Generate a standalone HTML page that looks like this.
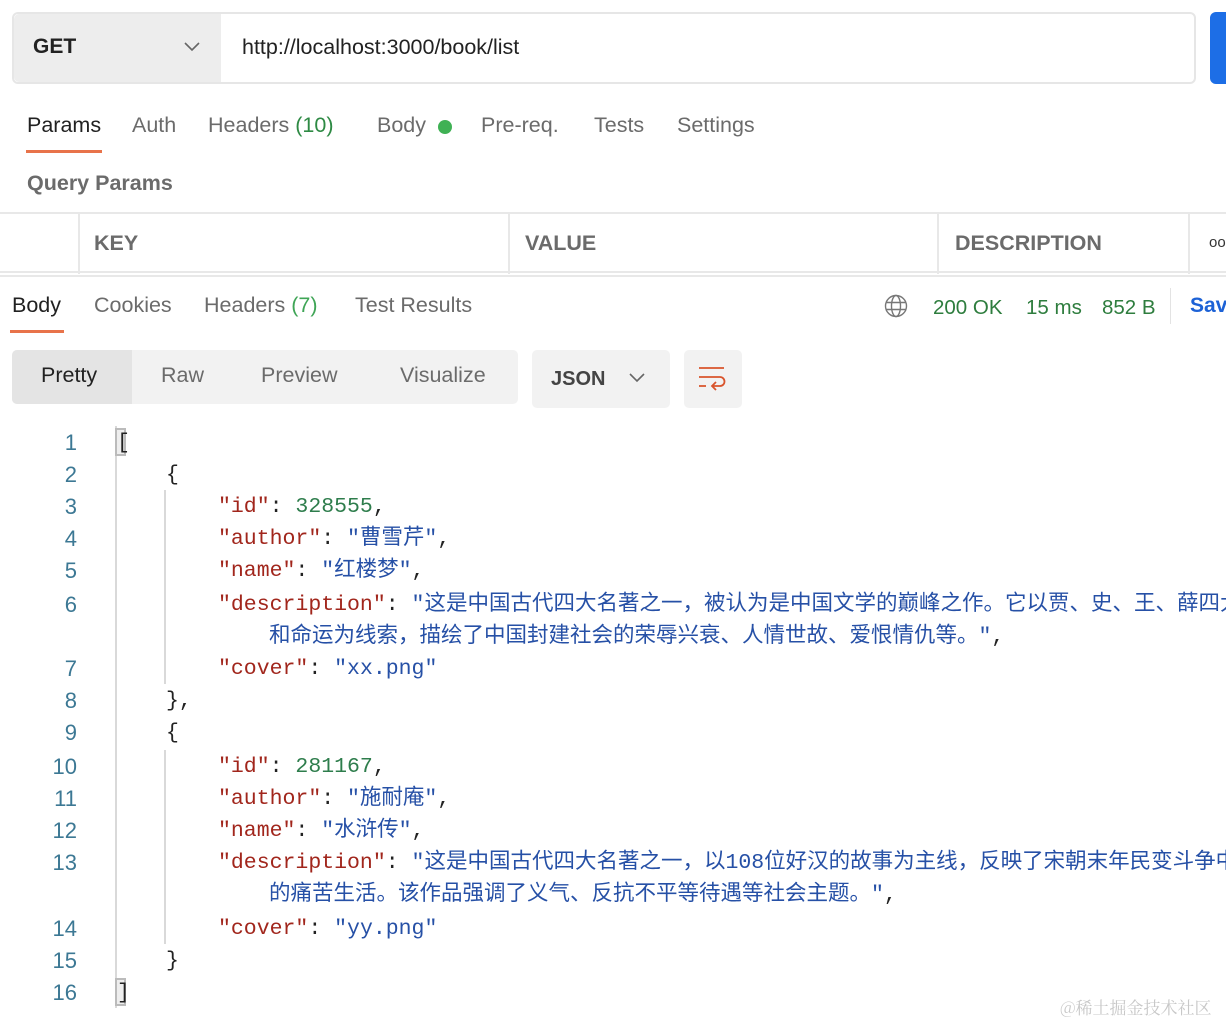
<!DOCTYPE html>
<html><head><meta charset="utf-8"><style>
*{margin:0;padding:0;box-sizing:border-box}
html,body{width:1226px;height:1022px;overflow:hidden}
body{background:#fff;font-family:"Liberation Sans","Noto Sans CJK SC",sans-serif;position:relative;color:#212121}
#w{position:absolute;left:0;top:0;width:1226px;height:1022px;overflow:hidden}
.a{position:absolute;white-space:nowrap}
.tab{font-size:21.5px;color:#6b6b6b}
.code{font-family:"Liberation Mono","Noto Sans CJK SC",monospace;font-size:21.5px;line-height:32px;height:32px}
.ln{position:absolute;width:60px;left:17px;text-align:right;font-family:"Liberation Sans",sans-serif;font-size:22px;color:#3c7894;line-height:32px}
.k{color:#a1261c}.s{color:#2650a6}.n{color:#2e7d4c}.p{color:#222}
</style></head><body><div id="w">
<div class="a" style="left:12px;top:12px;width:1184px;height:72px;border:2px solid #e6e6e6;border-radius:6px;background:#fff"></div>
<div class="a" style="left:14px;top:14px;width:207px;height:68px;background:#ededed;border-radius:5px 0 0 5px"></div>
<div class="a" style="left:33px;top:35px;font-size:21px;font-weight:bold;color:#222">GET</div>
<svg class="a" style="left:183px;top:40px" width="18" height="14"><path d="M2 3l7 7 7-7" stroke="#666" stroke-width="1.6" fill="none"/></svg>
<div class="a" style="left:242px;top:35px;font-size:21.5px;color:#222">http://localhost:3000/book/list</div>
<div class="a" style="left:1210px;top:12px;width:30px;height:72px;background:#1d6ee6;border-radius:6px"></div>
<div class="a tab" style="left:27px;top:113px;color:#212121">Params</div>
<div class="a" style="left:26px;top:150px;width:76px;height:3px;background:#e8734a"></div>
<div class="a tab" style="left:132px;top:113px">Auth</div>
<div class="a tab" style="left:208px;top:113px">Headers <span style="color:#2e8a44">(10)</span></div>
<div class="a tab" style="left:377px;top:113px">Body</div>
<div class="a" style="left:438px;top:120px;width:14px;height:14px;border-radius:50%;background:#3fb154"></div>
<div class="a tab" style="left:481px;top:113px">Pre-req.</div>
<div class="a tab" style="left:594px;top:113px">Tests</div>
<div class="a tab" style="left:677px;top:113px">Settings</div>
<div class="a" style="left:27px;top:171px;font-size:21.5px;font-weight:bold;color:#6b6b6b">Query Params</div>
<div class="a" style="left:0;top:212px;width:1226px;height:2px;background:#e8e8e8"></div>
<div class="a" style="left:0;top:271px;width:1226px;height:2px;background:#e8e8e8"></div>
<div class="a" style="left:0;top:275px;width:1226px;height:2px;background:#e8e8e8"></div>
<div class="a" style="left:78px;top:212px;width:2px;height:62px;background:#e8e8e8"></div>
<div class="a" style="left:508px;top:212px;width:2px;height:62px;background:#e8e8e8"></div>
<div class="a" style="left:937px;top:212px;width:2px;height:62px;background:#e8e8e8"></div>
<div class="a" style="left:1188px;top:212px;width:2px;height:62px;background:#e8e8e8"></div>
<div class="a" style="left:94px;top:231px;font-size:21.5px;font-weight:bold;color:#6b6b6b">KEY</div>
<div class="a" style="left:525px;top:231px;font-size:21.5px;font-weight:bold;color:#6b6b6b">VALUE</div>
<div class="a" style="left:955px;top:231px;font-size:21.5px;font-weight:bold;color:#6b6b6b">DESCRIPTION</div>
<div class="a" style="left:1209px;top:234px;font-size:15px;color:#333">oo</div>
<div class="a tab" style="left:12px;top:293px;color:#212121">Body</div>
<div class="a" style="left:10px;top:330px;width:54px;height:3px;background:#e8734a"></div>
<div class="a tab" style="left:94px;top:293px">Cookies</div>
<div class="a tab" style="left:204px;top:293px">Headers <span style="color:#3fa556">(7)</span></div>
<div class="a tab" style="left:355px;top:293px">Test Results</div>
<svg class="a" style="left:884px;top:294px" width="24" height="24" viewBox="0 0 24 24" fill="none" stroke="#777" stroke-width="1.4"><circle cx="12" cy="12" r="10.5"/><ellipse cx="12" cy="12" rx="4.5" ry="10.5"/><path d="M2 8.5h20M2 15.5h20"/></svg>
<div class="a" style="left:933px;top:296px;font-size:20.5px;color:#2e7d3e">200 OK</div>
<div class="a" style="left:1026px;top:296px;font-size:20.5px;color:#2e7d3e">15 ms</div>
<div class="a" style="left:1102px;top:296px;font-size:20.5px;color:#2e7d3e">852 B</div>
<div class="a" style="left:1170px;top:288px;width:1px;height:36px;background:#e3e3e3"></div>
<div class="a" style="left:1190px;top:294px;font-size:21px;font-weight:bold;color:#1d62d6">Save</div>
<div class="a" style="left:12px;top:350px;width:506px;height:54px;background:#f2f2f2;border-radius:5px"></div>
<div class="a" style="left:12px;top:350px;width:120px;height:54px;background:#e4e4e4;border-radius:5px 0 0 5px"></div>
<div class="a tab" style="left:41px;top:363px;color:#212121">Pretty</div>
<div class="a tab" style="left:161px;top:363px">Raw</div>
<div class="a tab" style="left:261px;top:363px">Preview</div>
<div class="a tab" style="left:400px;top:363px">Visualize</div>
<div class="a" style="left:532px;top:350px;width:138px;height:58px;background:#f2f2f2;border-radius:5px"></div>
<div class="a" style="left:551px;top:368px;font-size:20px;font-weight:bold;color:#444">JSON</div>
<svg class="a" style="left:628px;top:372px" width="18" height="12"><path d="M2 2l7 7 7-7" stroke="#666" stroke-width="1.6" fill="none"/></svg>
<div class="a" style="left:684px;top:350px;width:58px;height:58px;background:#f2f2f2;border-radius:5px"></div>
<svg class="a" style="left:698px;top:365px" width="30" height="28" viewBox="0 0 30 28" fill="none" stroke="#d9542c" stroke-width="1.8"><path d="M1 3h25M1 12h21a4.5 4.5 0 0 1 0 9h-7M1 21h7M18 17l-4 4 4 4"/></svg>
<div class="a" style="left:115px;top:426px;width:2px;height:582px;background:#d9d9d9"></div>
<div class="a" style="left:164px;top:490px;width:2px;height:194px;background:#d9d9d9"></div>
<div class="a" style="left:164px;top:750px;width:2px;height:194px;background:#d9d9d9"></div>
<div class="a" style="left:115px;top:428px;width:11px;height:28px;border:2px solid #bbb;background:#eee"></div>
<div class="a" style="left:115px;top:978px;width:11px;height:28px;border:2px solid #bbb;background:#eee"></div>
<div class="ln" style="top:427px">1</div>
<div class="ln" style="top:459px">2</div>
<div class="ln" style="top:491px">3</div>
<div class="ln" style="top:523px">4</div>
<div class="ln" style="top:555px">5</div>
<div class="ln" style="top:589px">6</div>
<div class="ln" style="top:653px">7</div>
<div class="ln" style="top:685px">8</div>
<div class="ln" style="top:717px">9</div>
<div class="ln" style="top:751px">10</div>
<div class="ln" style="top:783px">11</div>
<div class="ln" style="top:815px">12</div>
<div class="ln" style="top:847px">13</div>
<div class="ln" style="top:913px">14</div>
<div class="ln" style="top:945px">15</div>
<div class="ln" style="top:977px">16</div>
<div class="a code p" style="left:117px;top:427px">[</div>
<div class="a code p" style="left:166px;top:459px">{</div>
<div class="a code" style="left:218px;top:491px"><span class="k">"id"</span><span class="p">: </span><span class="n">328555</span><span class="p">,</span></div>
<div class="a code" style="left:218px;top:523px"><span class="k">"author"</span><span class="p">: </span><span class="s">"曹雪芹"</span><span class="p">,</span></div>
<div class="a code" style="left:218px;top:555px"><span class="k">"name"</span><span class="p">: </span><span class="s">"红楼梦"</span><span class="p">,</span></div>
<div class="a code" style="left:218px;top:589px"><span class="k">"description"</span><span class="p">: </span><span class="s">"这是中国古代四大名著之一，被认为是中国文学的巅峰之作。它以贾、史、王、薛四大</span></div>
<div class="a code" style="left:269px;top:621px"><span class="s">和命运为线索，描绘了中国封建社会的荣辱兴衰、人情世故、爱恨情仇等。"</span><span class="p">,</span></div>
<div class="a code" style="left:218px;top:653px"><span class="k">"cover"</span><span class="p">: </span><span class="s">"xx.png"</span></div>
<div class="a code p" style="left:166px;top:685px">},</div>
<div class="a code p" style="left:166px;top:717px">{</div>
<div class="a code" style="left:218px;top:751px"><span class="k">"id"</span><span class="p">: </span><span class="n">281167</span><span class="p">,</span></div>
<div class="a code" style="left:218px;top:783px"><span class="k">"author"</span><span class="p">: </span><span class="s">"施耐庵"</span><span class="p">,</span></div>
<div class="a code" style="left:218px;top:815px"><span class="k">"name"</span><span class="p">: </span><span class="s">"水浒传"</span><span class="p">,</span></div>
<div class="a code" style="left:218px;top:847px"><span class="k">"description"</span><span class="p">: </span><span class="s">"这是中国古代四大名著之一，以108位好汉的故事为主线，反映了宋朝末年民变斗争中</span></div>
<div class="a code" style="left:269px;top:879px"><span class="s">的痛苦生活。该作品强调了义气、反抗不平等待遇等社会主题。"</span><span class="p">,</span></div>
<div class="a code" style="left:218px;top:913px"><span class="k">"cover"</span><span class="p">: </span><span class="s">"yy.png"</span></div>
<div class="a code p" style="left:166px;top:945px">}</div>
<div class="a code p" style="left:117px;top:977px">]</div>
<div class="a" style="left:1060px;top:994px;font-size:17px;color:#c8c8c8;font-family:'Noto Serif CJK SC',serif">@稀土掘金技术社区</div>
</div></body></html>
